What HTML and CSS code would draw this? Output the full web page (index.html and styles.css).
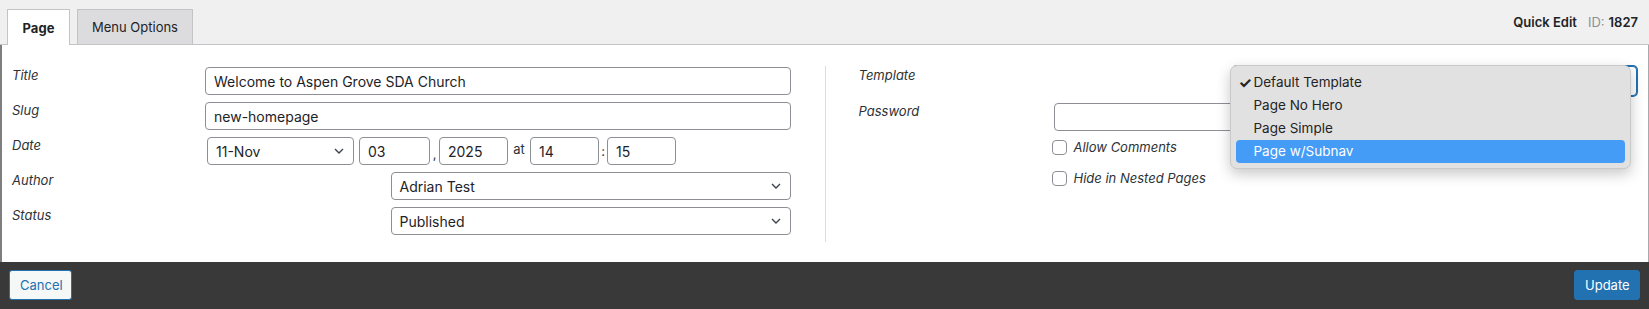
FILE: index.html
```html
<!DOCTYPE html>
<html lang="en">
<head>
<meta charset="utf-8">
<title>Quick Edit</title>
<link rel="stylesheet" href="styles.css">
</head>
<body>
<div class="qe">
  <div class="qe-head">
    <div class="tabs">
      <div class="tab tab-active">Page</div>
      <div class="tab tab-menu">Menu Options</div>
    </div>
    <div class="qe-title"><strong>Quick Edit</strong><span class="id-label">ID:</span><strong>1827</strong></div>
  </div>

  <div class="qe-body">
    <div class="col col-left">
      <div class="row">
        <span class="lbl">Title</span>
        <input class="field" type="text" value="Welcome to Aspen Grove SDA Church">
      </div>
      <div class="row">
        <span class="lbl">Slug</span>
        <input class="field" type="text" value="new-homepage">
      </div>
      <div class="row">
        <span class="lbl">Date</span>
        <div class="date">
          <div class="select sel-month"><span>11-Nov</span><svg class="chev" width="10" height="6" viewBox="0 0 10 6"><path d="M1 1l4 4 4-4" fill="none" stroke="#3c434a" stroke-width="1.4"/></svg></div>
          <input class="field small w71" type="text" value="03">
          <span class="sep sep-comma">,</span>
          <input class="field small" type="text" value="2025">
          <span class="sep sep-at">at</span>
          <input class="field small" type="text" value="14">
          <span class="sep sep-colon">:</span>
          <input class="field small" type="text" value="15">
        </div>
      </div>
      <div class="row">
        <span class="lbl">Author</span>
        <div class="select sel-wide"><span>Adrian Test</span><svg class="chev" width="10" height="6" viewBox="0 0 10 6"><path d="M1 1l4 4 4-4" fill="none" stroke="#3c434a" stroke-width="1.4"/></svg></div>
      </div>
      <div class="row">
        <span class="lbl">Status</span>
        <div class="select sel-wide"><span>Published</span><svg class="chev" width="10" height="6" viewBox="0 0 10 6"><path d="M1 1l4 4 4-4" fill="none" stroke="#3c434a" stroke-width="1.4"/></svg></div>
      </div>
    </div>

    <div class="divider"></div>

    <div class="col col-right">
      <div class="row">
        <span class="lbl">Template</span>
        <div class="tpl-cell">
          <div class="select sel-focus"></div>
          <div class="popup">
            <div class="opt"><span class="check">✓</span>Default Template</div>
            <div class="opt">Page No Hero</div>
            <div class="opt">Page Simple</div>
            <div class="opt opt-hi">Page w/Subnav</div>
          </div>
        </div>
      </div>
      <div class="row">
        <span class="lbl">Password</span>
        <input class="field pw" type="text" value="">
      </div>
      <div class="row">
        <span class="lbl"></span>
        <div class="checks">
          <label class="chk"><span class="box"></span><em>Allow Comments</em></label>
          <label class="chk"><span class="box"></span><em>Hide in Nested Pages</em></label>
        </div>
      </div>
    </div>
  </div>

  <div class="qe-foot">
    <button class="btn btn-cancel">Cancel</button>
    <button class="btn btn-update">Update</button>
  </div>
</div>
</body>
</html>
```

FILE: styles.css
```css
* { box-sizing: border-box; }
html, body { margin: 0; padding: 0; }
body {
  width: 1649px;
  height: 309px;
  overflow: hidden;
  background: #fff;
  font-family: Inter, "Noto Sans", "Liberation Sans", sans-serif;
  font-size: 13px;
  color: #1d2327;
}
.qe { width: 1649px; height: 309px; display: flex; flex-direction: column; }

/* header */
.qe-head {
  height: 45px;
  flex: none;
  background: #f0f0f1;
  border-bottom: 1px solid #c3c4c7;
  display: flex;
  justify-content: space-between;
  align-items: flex-end;
  padding: 0 11px 0 7px;
}
.tabs { display: flex; gap: 7px; margin-bottom: -1px; }
.tab {
  height: 35px;
  border: 1px solid #c3c4c7;
  border-bottom: none;
  background: #dcdcde;
  display: flex;
  align-items: center;
  justify-content: center;
  color: #1d2327;
  font-size: 13px;
}
.tab-active { background: #fff; font-weight: 700; height: 36px; width: 63px; }
.tab-menu { width: 116px; }
.qe-title { align-self: center; display: flex; gap: 5px; font-size: 13px; color: #1d2327; }
.qe-title strong { font-weight: 600; }
.qe-title .id-label { color: #8c8f94; margin-left: 6px; margin-right: -1px; }

/* body */
.qe-body {
  flex: 1;
  display: flex;
  align-items: flex-start;
  border-left: 2px solid #7e7e7e;
  border-right: 1px solid #a7aaad;
  padding: 22px 11px 0 10px;
}
.col { width: 779px; display: flex; flex-direction: column; gap: 7px; }
.row { display: grid; grid-template-columns: 193px 1fr; align-items: start; min-height: 28px; }
.col-right .row { grid-template-columns: 195px 1fr; }
.lbl { font-style: italic; line-height: 16px; color: #2c3338; }
.divider { width: 1px; align-self: flex-start; height: 176px; margin: -1px 33px 0 34px; background: #dcdcde; }

.field {
  height: 28px;
  width: 100%;
  border: 1px solid #8c8f94;
  border-radius: 4px;
  padding: 0 8px;
  font: 14px Inter, "Noto Sans", "Liberation Sans", sans-serif;
  color: #1d2327;
  background: #fff;
  outline: none;
}
.field.pw { width: 540px; }
.select {
  height: 28px;
  border: 1px solid #8c8f94;
  border-radius: 4px;
  padding: 0 9px 0 8px;
  font-size: 14px;
  display: flex;
  align-items: center;
  justify-content: space-between;
  background: #fff;
  color: #1d2327;
}
.chev { flex: none; }
.sel-wide { width: 400px; justify-self: end; }
.sel-month { width: 147px; }

.date { display: flex; align-items: center; margin-left: 2px; }
.date .sel-month { margin-right: 5px; }
.field.small { width: 69px; }
.field.w71 { width: 71px; }
.sep { font-size: 13px; color: #2c3338; text-align: center; }
.sep-comma { width: 9px; padding-top: 6px; }
.sep-at { width: 22px; margin-top: -4px; }
.sep-colon { width: 8px; }

/* template + popup */
.tpl-cell { position: relative; display: flex; justify-content: flex-end; }
.sel-focus {
  height: 30px;
  margin-top: -1px;
  border: 1px solid #2271b1;
  box-shadow: 0 0 0 1px #2271b1;
  width: 404px;
}
.popup {
  position: absolute;
  left: 176px;
  top: -2px;
  width: 401px;
  padding: 5px 5px;
  background: #e1e1e1;
  border: 1px solid #c9c9c9;
  border-radius: 7px;
  box-shadow: 0 5px 14px rgba(0,0,0,0.22);
  font-size: 13.5px;
  color: #242424;
}
.opt { height: 23px; line-height: 23px; padding-left: 18px; position: relative; border-radius: 4px; }
.check { position: absolute; left: 3px; top: 0; font-size: 15px; font-weight: 700; }
.opt-hi { background: #449cf6; color: #fff; }

.checks { display: flex; flex-direction: column; gap: 15px; padding-top: 1px; margin-left: -2px; }
.chk { display: flex; align-items: center; gap: 7px; height: 16px; color: #2c3338; }
.chk em { font-style: italic; font-size: 13px; }
.box { width: 15px; height: 15px; border: 1px solid #8c8f94; border-radius: 4px; background: #fff; flex: none; }

/* footer */
.qe-foot {
  height: 47px;
  flex: none;
  background: #393939;
  display: flex;
  justify-content: space-between;
  align-items: flex-start;
  padding: 8px 9px 0 9px;
}
.btn {
  height: 30px;
  border-radius: 3px;
  font: 13px Inter, "Noto Sans", "Liberation Sans", sans-serif;
  border: 1px solid #2271b1;
  padding: 0 10px;
  cursor: pointer;
}
.btn-cancel { width: 63px; background: #f6f7f7; color: #2271b1; }
.btn-update { width: 66px; background: #2271b1; color: #fff; }
```
